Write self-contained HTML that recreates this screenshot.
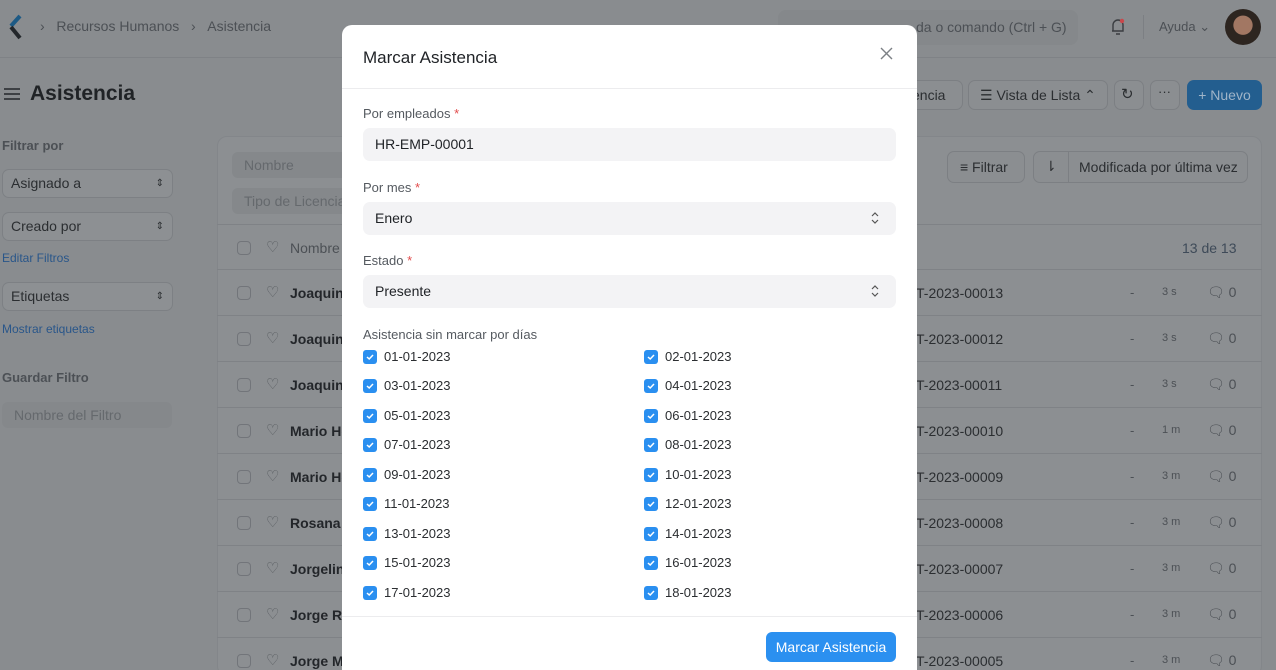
<!DOCTYPE html>
<html><head><meta charset="utf-8"><style>
*{box-sizing:border-box;margin:0;padding:0}
html{width:1276px;height:670px;overflow:hidden}
body{width:1276px;height:670px;overflow:hidden;background:#898c8f;font-family:"Liberation Sans",sans-serif;color:#2b2e31;position:relative;font-size:14px}
.a{position:absolute;white-space:nowrap}
.muted{color:#4c5055}
.bx{position:absolute;border:1px solid #7c7f83;border-radius:7px;background:#8b8e91}
.sel{position:absolute;background:#8d9093;border:1px solid #7d8084;border-radius:7px;font-size:14px;padding:0 8px;line-height:27px;color:#2b2e31}
.cb{position:absolute;width:14px;height:14px;border:1px solid #72757a;border-radius:4px}
.row{position:absolute;left:217px;width:1045px;height:1px;background:#7f8286}
.modal{position:absolute;left:342px;top:25px;width:575px;height:645px;background:#fff;border-radius:10px 10px 0 0;overflow:hidden}
.m{position:absolute;white-space:nowrap}
.lbl{font-size:13px;color:#555a60}
.lbl b{color:#e24c4c;font-weight:normal}
.inp{position:absolute;left:21px;width:533px;height:33px;background:#f3f3f5;border-radius:7px;font-size:14px;line-height:33px;padding-left:12px;color:#1f2226}
.ck{position:absolute;width:14px;height:14px;background:#2a8ff0;border-radius:3px}
.ck svg{position:absolute;left:2px;top:2px}
.dt{position:absolute;font-size:13px;color:#2b2e31}
</style></head><body>
<div class="a" style="left:0;top:57px;width:1276px;height:1px;background:#7f8286"></div>
<svg class="a" style="left:8px;top:14px" width="16" height="26" viewBox="0 0 16 26"><path d="M12 2 L3 12" stroke="#1d5a85" stroke-width="4"/><path d="M3 13 L12 24" stroke="#23272b" stroke-width="4"/></svg>
<div class="a muted" style="left:40px;top:18px;font-size:14px">›&nbsp;&nbsp;&nbsp;Recursos Humanos&nbsp;&nbsp;&nbsp;›&nbsp;&nbsp;&nbsp;Asistencia</div>
<div class="a" style="left:778px;top:10px;width:300px;height:35px;background:#85888b;border-radius:8px"></div>
<div class="a muted" style="left:916px;top:19px;font-size:14px">da o comando (Ctrl + G)</div>
<svg class="a" style="left:1110px;top:17px" width="16" height="20" viewBox="0 0 16 20"><path d="M3 14 V8 a5 5 0 0 1 10 0 V14 H2 M6 17 h4" fill="none" stroke="#3a3d41" stroke-width="1.4"/><circle cx="12" cy="4" r="2.2" fill="#c9474b"/></svg>
<div class="a" style="left:1143px;top:15px;width:1px;height:24px;background:#7c7f83"></div>
<div class="a muted" style="left:1159px;top:19px;font-size:13px">Ayuda ⌄</div>
<div class="a" style="left:1225px;top:9px;width:36px;height:36px;border-radius:50%;background:radial-gradient(circle at 50% 45%,#a27763 0 35%,#2d2520 37%)"></div>
<div class="a" style="left:4px;top:88px;width:16px;height:2px;background:#3d4044;box-shadow:0 5px 0 #3d4044,0 10px 0 #3d4044"></div>
<div class="a" style="left:30px;top:82px;font-size:21px;font-weight:bold;color:#202326">Asistencia</div>
<div class="bx" style="left:900px;top:80px;width:63px;height:30px"></div>
<div class="a" style="left:912px;top:87px;font-size:14px">encia</div>
<div class="bx" style="left:968px;top:80px;width:140px;height:30px"></div>
<div class="a" style="left:980px;top:87px;font-size:14px">☰ Vista de Lista ⌃</div>
<div class="bx" style="left:1114px;top:80px;width:30px;height:30px"></div>
<div class="a" style="left:1121px;top:85px;font-size:15px">↻</div>
<div class="bx" style="left:1150px;top:80px;width:30px;height:30px"></div>
<div class="a" style="left:1158px;top:84px;font-size:13px">···</div>
<div class="a" style="left:1187px;top:80px;width:75px;height:30px;background:#235e8f;border-radius:7px;color:#9fb4c8;font-size:14px;line-height:30px;text-align:center">+ Nuevo</div>
<div class="a muted" style="left:2px;top:138px;font-size:13px;font-weight:bold">Filtrar por</div>
<div class="sel" style="left:2px;top:169px;width:171px">Asignado a<span style="float:right;font-size:10px">⇕</span></div>
<div class="sel" style="left:2px;top:212px;width:171px">Creado por<span style="float:right;font-size:10px">⇕</span></div>
<div class="a" style="left:2px;top:251px;font-size:12px;color:#29568a">Editar Filtros</div>
<div class="sel" style="left:2px;top:282px;width:171px">Etiquetas<span style="float:right;font-size:10px">⇕</span></div>
<div class="a" style="left:2px;top:322px;font-size:12px;color:#29568a">Mostrar etiquetas</div>
<div class="a muted" style="left:2px;top:370px;font-size:13px;font-weight:bold">Guardar Filtro</div>
<div class="a" style="left:2px;top:402px;width:170px;height:26px;background:#85888b;border-radius:6px;font-size:14px;line-height:26px;padding-left:12px;color:#65696d">Nombre del Filtro</div>
<div class="a" style="left:217px;top:136px;width:1045px;height:540px;background:#8c8f92;border:1px solid #83868a;border-radius:10px"></div>
<div class="a" style="left:232px;top:152px;width:120px;height:26px;background:#85888b;border-radius:6px;font-size:14px;line-height:26px;padding-left:12px;color:#65696d">Nombre</div>
<div class="a" style="left:232px;top:188px;width:120px;height:26px;background:#85888b;border-radius:6px;font-size:14px;line-height:26px;padding-left:12px;color:#65696d">Tipo de Licencia</div>
<div class="bx" style="left:947px;top:151px;width:78px;height:32px"></div>
<div class="a" style="left:960px;top:159px;font-size:14px">≡ Filtrar</div>
<div class="bx" style="left:1033px;top:151px;width:215px;height:32px"></div>
<div class="a" style="left:1068px;top:151px;width:1px;height:32px;background:#7c7f83"></div>
<div class="a" style="left:1045px;top:158px;font-size:14px">⇂</div>
<div class="a" style="left:1079px;top:159px;font-size:14px">Modificada por última vez</div>
<div class="row" style="top:224px"></div>
<div class="cb" style="left:237px;top:241px"></div>
<div class="a" style="left:266px;top:238px;font-size:15px;color:#55595d">♡</div>
<div class="a muted" style="left:290px;top:240px;font-size:14px">Nombre</div>
<div class="a muted" style="left:900px;top:240px;font-size:14px">re</div>
<div class="a" style="left:1182px;top:240px;font-size:14px;color:#3e4a58">13 de 13</div>
<div id="rows"></div>
<script>
var names=["Joaquin","Joaquin","Joaquin","Mario He","Mario He","Rosana A","Jorgelina","Jorge Ro","Jorge M."];
var ids=["13","12","11","10","09","08","07","06","05"];
var tm=["3 s","3 s","3 s","1 m","3 m","3 m","3 m","3 m","3 m"];
var h="";
for(var i=0;i<9;i++){var y=293+i*46;
h+='<div class="row" style="top:'+(y-24)+'px"></div>';
h+='<div class="cb" style="left:237px;top:'+(y-7)+'px"></div>';
h+='<div class="a" style="left:266px;top:'+(y-10)+'px;font-size:15px;color:#55595d">♡</div>';
h+='<div class="a" style="left:290px;top:'+(y-8)+'px;font-size:14px;font-weight:bold;color:#23262a">'+names[i]+'</div>';
h+='<div class="a" style="left:916px;top:'+(y-8)+'px;font-size:14px">T-2023-000'+ids[i]+'</div>';
h+='<div class="a muted" style="left:1130px;top:'+(y-8)+'px;font-size:13px">-</div>';
h+='<div class="a muted" style="left:1162px;top:'+(y-7)+'px;font-size:11px">'+tm[i]+'</div>';
h+='<div class="a muted" style="left:1207px;top:'+(y-9)+'px;font-size:14px">🗨 0</div>';}
document.getElementById("rows").innerHTML=h;
</script>
<div class="modal">
<div class="m" style="left:21px;top:23px;font-size:17px;color:#1f2226">Marcar Asistencia</div>
<svg class="m" style="left:538px;top:22px" width="13" height="13" viewBox="0 0 13 13"><path d="M1 1L12 12M12 1L1 12" stroke="#7c8085" stroke-width="1.4"/></svg>
<div class="m" style="left:0;top:63px;width:575px;height:1px;background:#ececee"></div>
<div class="m lbl" style="left:21px;top:81px">Por empleados <b>*</b></div>
<div class="inp" style="top:103px">HR-EMP-00001</div>
<div class="m lbl" style="left:21px;top:155px">Por mes <b>*</b></div>
<div class="inp" style="top:177px">Enero</div>
<div class="m lbl" style="left:21px;top:228px">Estado <b>*</b></div>
<div class="inp" style="top:250px">Presente</div>
<svg class="m" style="left:529px;top:187px" width="8" height="12" viewBox="0 0 8 12"><path d="M1 4L4 1L7 4M1 8L4 11L7 8" fill="none" stroke="#555" stroke-width="1.2"/></svg>
<svg class="m" style="left:529px;top:260px" width="8" height="12" viewBox="0 0 8 12"><path d="M1 4L4 1L7 4M1 8L4 11L7 8" fill="none" stroke="#555" stroke-width="1.2"/></svg>
<div class="m lbl" style="left:21px;top:302px">Asistencia sin marcar por días</div>
<div id="cks"></div>
<div class="m" style="left:0;top:591px;width:575px;height:1px;background:#ececee"></div>
<div class="m" style="left:424px;top:607px;width:130px;height:30px;background:#2b90f0;border-radius:6px;color:#fff;font-size:14px;line-height:30px;text-align:center">Marcar Asistencia</div>
</div>
<script>
var c="";
var ys=[357,386,416,445,475,504,534,563,593];
for(var i=0;i<9;i++){var y=ys[i]-25;
for(var j=0;j<2;j++){var d=i*2+j+1;var dd=(d<10?"0":"")+d;var x=j?302:21;
c+='<div class="ck" style="left:'+x+'px;top:'+(y-7)+'px"><svg width="10" height="10" viewBox="0 0 10 10"><path d="M2 5L4.2 7L8 3" fill="none" stroke="#fff" stroke-width="1.5"/></svg></div>';
c+='<div class="dt" style="left:'+(x+21)+'px;top:'+(y-8)+'px">'+dd+'-01-2023</div>';}}
document.getElementById("cks").innerHTML=c;
</script>
</body></html>
